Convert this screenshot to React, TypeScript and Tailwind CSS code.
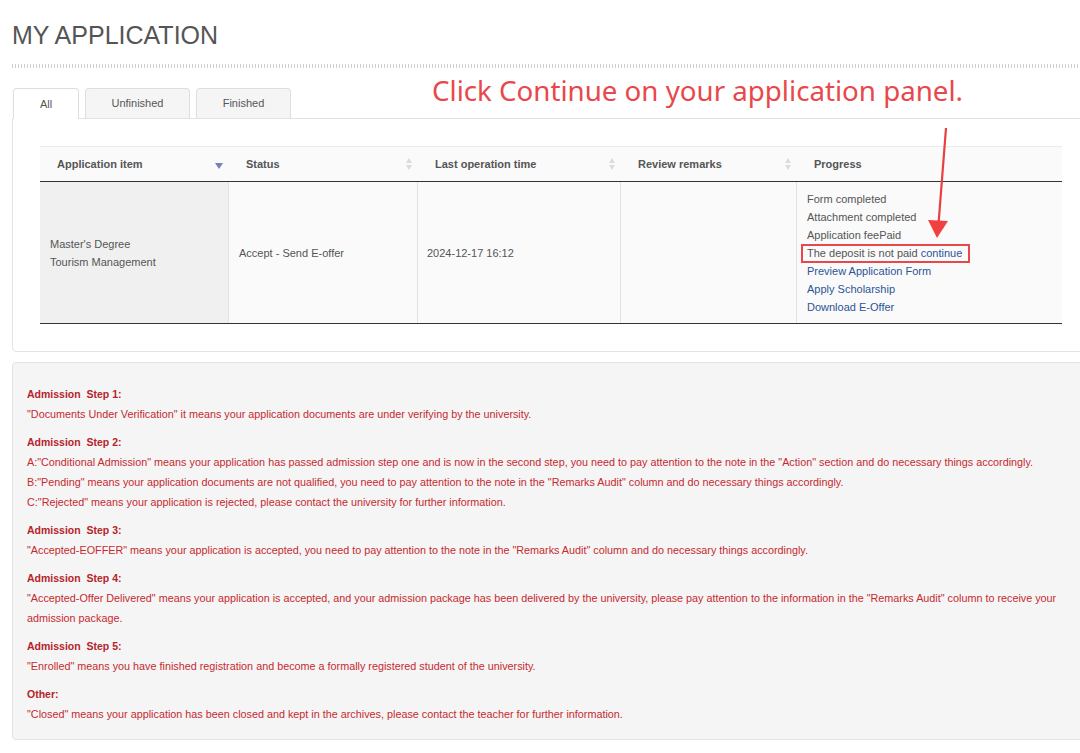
import React from "react";

type Col = { label: string; width: string; sort: "down" | "both" | "none" };

const COLUMNS: Col[] = [
  { label: "Application item", width: "w-[189px]", sort: "down" },
  { label: "Status", width: "w-[189px]", sort: "both" },
  { label: "Last operation time", width: "w-[203px]", sort: "both" },
  { label: "Review remarks", width: "w-[176px]", sort: "both" },
  { label: "Progress", width: "w-[265px]", sort: "none" },
];

const NOTES: { title: string; lines: string[] }[] = [
  {
    title: "Admission\u00a0 Step 1:",
    lines: [
      "\"Documents Under Verification\" it means your application documents are under verifying by the university.",
    ],
  },
  {
    title: "Admission\u00a0 Step 2:",
    lines: [
      "A:\"Conditional Admission\" means your application has passed admission step one and is now in the second step, you need to pay attention to the note in the \"Action\" section and do necessary things accordingly.",
      "B:\"Pending\" means your application documents are not qualified, you need to pay attention to the note in the \"Remarks Audit\" column and do necessary things accordingly.",
      "C:\"Rejected\" means your application is rejected, please contact the university for further information.",
    ],
  },
  {
    title: "Admission\u00a0 Step 3:",
    lines: [
      "\"Accepted-EOFFER\" means your application is accepted, you need to pay attention to the note in the \"Remarks Audit\" column and do necessary things accordingly.",
    ],
  },
  {
    title: "Admission\u00a0 Step 4:",
    lines: [
      "\"Accepted-Offer Delivered\" means your application is accepted, and your admission package has been delivered by the university, please pay attention to the information in the \"Remarks Audit\" column to receive your",
      "admission package.",
    ],
  },
  {
    title: "Admission\u00a0 Step 5:",
    lines: [
      "\"Enrolled\" means you have finished registration and become a formally registered student of the university.",
    ],
  },
  {
    title: "Other:",
    lines: [
      "\"Closed\" means your application has been closed and kept in the archives, please contact the teacher for further information.",
    ],
  },
];

function SortIcon({ kind }: { kind: Col["sort"] }) {
  if (kind === "none") return null;
  if (kind === "down") {
    return (
      <svg width="8" height="6" viewBox="0 0 8 6" className="mt-[4px]">
        <path d="M0 0 L8 0 L4 6 Z" fill="#7a80b8" />
      </svg>
    );
  }
  return (
    <svg width="6" height="12" viewBox="0 0 6 12">
      <path d="M0 5 L6 5 L3 0 Z" fill="#dcdcdc" />
      <path d="M0 7 L6 7 L3 12 Z" fill="#dcdcdc" />
    </svg>
  );
}

export default function App() {
  return (
    <div className="relative w-[1080px] h-[753px] overflow-hidden bg-white font-['Liberation_Sans',Arial,sans-serif]">
      <div className="pl-3 pt-[20px]">
        <h1 className="text-[25px] leading-[30px] text-[#555]">MY APPLICATION</h1>
        <div className="mt-[14px] h-[4px] w-[1080px] bg-[repeating-linear-gradient(90deg,#cfcfcf_0px,#cfcfcf_1px,transparent_1px,transparent_3px)]" />

        {/* tabs */}
        <div className="mt-[20px] flex gap-[6px] pl-px">
          <div className="relative z-10 -mb-px flex h-[31px] w-[66px] items-center justify-center rounded-t-[4px] border border-b-0 border-[#dedede] bg-white text-[11px] text-[#555]">
            All
          </div>
          <div className="flex h-[30px] w-[105px] items-center justify-center rounded-t-[4px] border border-b-0 border-[#dedede] bg-[#f5f5f5] text-[11px] text-[#555]">
            Unfinished
          </div>
          <div className="flex h-[30px] w-[95px] items-center justify-center rounded-t-[4px] border border-b-0 border-[#dedede] bg-[#f5f5f5] text-[11px] text-[#555]">
            Finished
          </div>
        </div>

        {/* tab panel */}
        <div className="w-[1090px] rounded-bl-[4px] border border-[#e3e3e3] px-[27px] pt-[27px] pb-[27px]">
          <div className="w-[1022px]">
            <div className="flex h-[36px] border-t border-[#ececec] border-b-[1.5px] border-b-[#333] bg-[#fafafa]">
              {COLUMNS.map((c) => (
                <div
                  key={c.label}
                  className={`${c.width} flex items-center justify-between pl-[17px] pr-[6px] text-[11px] font-bold text-[#555]`}
                >
                  <span>{c.label}</span>
                  <SortIcon kind={c.sort} />
                </div>
              ))}
            </div>
            <div className="flex h-[142px] border-b-[1.5px] border-[#333] text-[11px] leading-[18px] text-[#555]">
              <div className="flex w-[189px] flex-col justify-center border-r border-[#e2e2e2] bg-[#f0f0f0] pl-[10px]">
                <span>Master's Degree</span>
                <span>Tourism Management</span>
              </div>
              <div className="flex w-[189px] items-center border-r border-[#e2e2e2] bg-[#fafafa] pl-[10px]">
                Accept - Send E-offer
              </div>
              <div className="flex w-[203px] items-center border-r border-[#e2e2e2] bg-[#fafafa] pl-[9px]">
                2024-12-17 16:12
              </div>
              <div className="w-[176px] border-r border-[#e2e2e2] bg-[#fafafa]" />
              <div className="flex w-[265px] flex-col justify-center bg-[#fafafa] pl-[10px]">
                <span>Form completed</span>
                <span>Attachment completed</span>
                <span>Application feePaid</span>
                <span>
                  The deposit is not paid <span className="text-[#2b5597]">continue</span>
                </span>
                <span className="text-[#2b5597]">Preview Application Form</span>
                <span className="text-[#2b5597]">Apply Scholarship</span>
                <span className="text-[#2b5597]">Download E-Offer</span>
              </div>
            </div>
          </div>
        </div>

        {/* notes */}
        <div className="mt-[10px] w-[1090px] rounded-[4px] border border-[#e3e3e3] bg-[#f5f5f5] pl-[14px] pt-[21px] pb-[15px] text-[10.8px] leading-[20px]">
          {NOTES.map((n, i) => (
            <div key={n.title} className={i === 0 ? "" : "mt-[8px]"}>
              <div className="text-[10.5px] font-bold text-[#b5232b]">{n.title}</div>
              {n.lines.map((l) => (
                <div key={l} className="whitespace-nowrap text-[#c52a30]">
                  {l}
                </div>
              ))}
            </div>
          ))}
        </div>
      </div>

      {/* annotation overlay */}
      <div className="absolute left-[432px] top-[71px] font-['Noto_Sans',sans-serif] text-[27.7px] leading-[38px] text-[#e8484b]">
        Click Continue on your application panel.
      </div>
      <div className="absolute left-[801px] top-[244px] h-[19px] w-[169px] border-2 border-[#e8484b]" />
      <svg className="pointer-events-none absolute left-0 top-0" width="1080" height="753">
        <line x1="946" y1="128" x2="938.5" y2="224" stroke="#e8403f" strokeWidth="2.2" />
        <path d="M928 220 L948 221 L937 238 Z" fill="#f0403f" />
      </svg>
    </div>
  );
}
